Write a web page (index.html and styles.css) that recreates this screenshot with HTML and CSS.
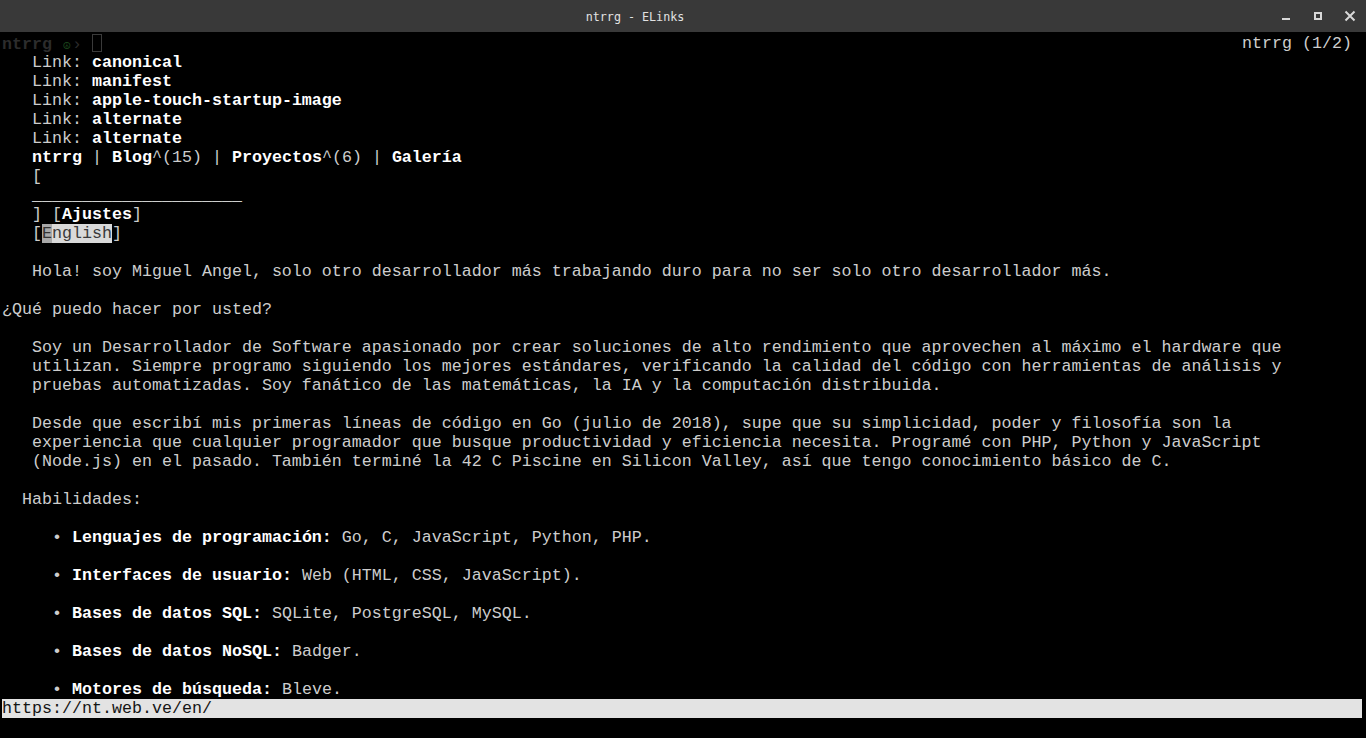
FILE: index.html
```html
<!DOCTYPE html>
<html lang="es">
<head>
<meta charset="utf-8">
<title>ntrrg - ELinks</title>
<link rel="stylesheet" href="styles.css">
</head>
<body>
<div class="window">
  <div class="titlebar">
    <div class="title">ntrrg - ELinks</div>
    <div class="controls">
      <div class="btn"><svg width="12" height="12" viewBox="0 0 12 12"><rect x="2" y="8" width="8" height="2" fill="#d8d8d8"/></svg></div>
      <div class="btn"><svg width="12" height="12" viewBox="0 0 12 12"><rect x="3" y="3" width="6" height="6" fill="none" stroke="#d8d8d8" stroke-width="2"/></svg></div>
      <div class="btn"><svg width="12" height="12" viewBox="0 0 12 12"><path d="M1.5 1.5 L10.5 10.5 M10.5 1.5 L1.5 10.5" stroke="#d8d8d8" stroke-width="2" fill="none"/></svg></div>
    </div>
  </div>
  <div class="term">
    <div class="row first"><span class="prompt"><b class="ghost">ntrrg</b> <span class="cell peace">☮</span><span class="cell ghost2">›</span> <span class="cursor"></span></span><span>ntrrg (1/2) </span></div>
    <div class="row">   Link: <b>canonical</b></div>
    <div class="row">   Link: <b>manifest</b></div>
    <div class="row">   Link: <b>apple-touch-startup-image</b></div>
    <div class="row">   Link: <b>alternate</b></div>
    <div class="row">   Link: <b>alternate</b></div>
    <div class="row">   <b>ntrrg</b> | <b>Blog</b>^(15) | <b>Proyectos</b>^(6) | <b>Galería</b></div>
    <div class="row">   [</div>
    <div class="row">   _____________________</div>
    <div class="row">   ] [<b>Ajustes</b>]</div>
    <div class="row">   [<span class="sel"><span class="cur">E</span>nglish</span>]</div>
    <div class="row"> </div>
    <div class="row">   Hola! soy Miguel Angel, solo otro desarrollador más trabajando duro para no ser solo otro desarrollador más.</div>
    <div class="row"> </div>
    <div class="row">¿Qué puedo hacer por usted?</div>
    <div class="row"> </div>
    <div class="row">   Soy un Desarrollador de Software apasionado por crear soluciones de alto rendimiento que aprovechen al máximo el hardware que</div>
    <div class="row">   utilizan. Siempre programo siguiendo los mejores estándares, verificando la calidad del código con herramientas de análisis y</div>
    <div class="row">   pruebas automatizadas. Soy fanático de las matemáticas, la IA y la computación distribuida.</div>
    <div class="row"> </div>
    <div class="row">   Desde que escribí mis primeras líneas de código en Go (julio de 2018), supe que su simplicidad, poder y filosofía son la</div>
    <div class="row">   experiencia que cualquier programador que busque productividad y eficiencia necesita. Programé con PHP, Python y JavaScript</div>
    <div class="row">   (Node.js) en el pasado. También terminé la 42 C Piscine en Silicon Valley, así que tengo conocimiento básico de C.</div>
    <div class="row"> </div>
    <div class="row">  Habilidades:</div>
    <div class="row"> </div>
    <div class="row">     <span class="cell">•</span> <b>Lenguajes de programación:</b> Go, C, JavaScript, Python, PHP.</div>
    <div class="row"> </div>
    <div class="row">     <span class="cell">•</span> <b>Interfaces de usuario:</b> Web (HTML, CSS, JavaScript).</div>
    <div class="row"> </div>
    <div class="row">     <span class="cell">•</span> <b>Bases de datos SQL:</b> SQLite, PostgreSQL, MySQL.</div>
    <div class="row"> </div>
    <div class="row">     <span class="cell">•</span> <b>Bases de datos NoSQL:</b> Badger.</div>
    <div class="row"> </div>
    <div class="row">     <span class="cell">•</span> <b>Motores de búsqueda:</b> Bleve.</div>
    <div class="row status">https://nt.web.ve/en/</div>
  </div>
</div>
</body>
</html>
```

FILE: styles.css
```css
html, body {
  margin: 0;
  padding: 0;
  background: #000;
}

.window {
  width: 1366px;
  height: 738px;
  overflow: hidden;
  background: #000;
}

.titlebar {
  height: 32px;
  background: #393939;
  display: flex;
  align-items: center;
}

.title {
  flex: 1;
  text-align: center;
  font-family: "DejaVu Sans Mono", monospace;
  font-size: 11.7px;
  color: #e2e2e2;
  padding-top: 1px;
}

.controls {
  display: flex;
  height: 32px;
}

.btn {
  width: 32px;
  height: 32px;
  display: flex;
  align-items: center;
  justify-content: center;
}

.term {
  padding: 2px 4px 0 2px;
  font-family: "Liberation Mono", "DejaVu Sans Mono", monospace;
  font-size: 16.6667px;
  line-height: 19px;
  color: #cdcdcd;
}

.row {
  height: 19px;
  white-space: pre;
}

.row b {
  color: #ffffff;
  font-weight: bold;
}

.first {
  display: flex;
  justify-content: space-between;
}

.prompt {
  display: block;
  white-space: pre;
}

.row b.ghost {
  color: #2c2c2c;
}

.ghost2 {
  color: #2a2a2a;
}

.cell {
  display: inline-block;
  width: 10px;
  text-align: center;
}

.peace {
  color: #1d4a1d;
  font-size: 12px;
}

.cursor {
  display: inline-block;
  width: 8px;
  height: 16px;
  border: 1px solid #3a3a3a;
  box-sizing: content-box;
  vertical-align: -3px;
}

.sel {
  background: #d9d9d9;
  color: #3a3a3a;
}

.cur {
  background: #a8a8a8;
  color: #333;
}

.status {
  background: #e3e3e3;
  color: #151515;
}
```
